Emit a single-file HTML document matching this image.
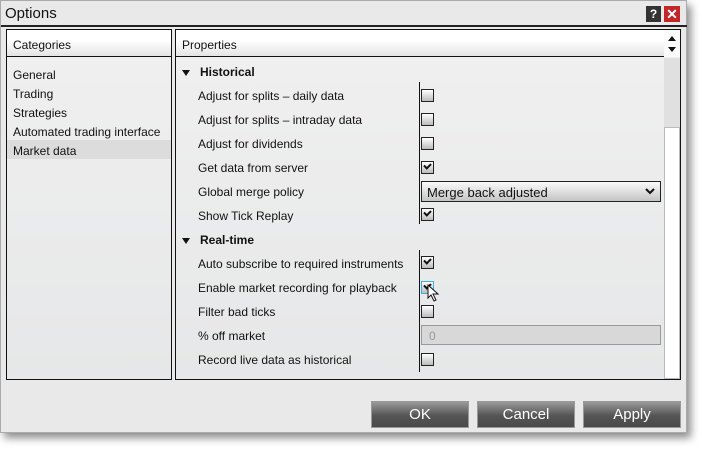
<!DOCTYPE html>
<html><head><style>
*{margin:0;padding:0;box-sizing:border-box}
body{width:702px;height:449px;background:#fff;font-family:"Liberation Sans",sans-serif;font-size:12px;color:#111;position:relative;overflow:hidden}
.win{position:absolute;left:0;top:0;width:687px;height:433px;background:#e9e9e9;border:1px solid #aaa;box-shadow:4px 5px 8px rgba(0,0,0,.45)}
.title{position:absolute;left:4px;top:4px;font-size:15px;color:#111}
.tline{position:absolute;left:0;top:24px;width:686px;height:2px;background:#222}
.a{position:absolute}
.panel{position:absolute;border:1px solid #111;background:linear-gradient(#f0f0f0,#e6e7e8)}
.hdr{position:absolute;left:0;top:0;right:0;height:27px;border-bottom:1px solid #111;background:linear-gradient(#fff 0,#fff 40%,#e4e4e4 100%);padding:8px 0 0 6px;font-size:12px}
.cb{position:absolute;left:421px;width:13px;height:13px;border:1px solid #222;background:linear-gradient(#fff,#bbb)}
.cb.c::after{content:"";position:absolute;left:2px;top:1px;width:5px;height:3px;border-left:2px solid #111;border-bottom:2px solid #111;transform:rotate(-45deg)}
.lbl{position:absolute;left:198px}
.sec{position:absolute;left:200px;font-weight:bold}
.tri{position:absolute;left:182px;width:0;height:0;border-left:4px solid transparent;border-right:4px solid transparent;border-top:6px solid #111}
.btn{position:absolute;top:401px;width:98px;height:27px;border:1px solid #999;background:linear-gradient(#9a9a9a,#555 55%,#4a4a4a);color:#fff;font-size:15px;text-align:center;line-height:25px}
</style></head><body>
<div class="win">
<div class="title">Options</div>
<div class="a" style="left:645px;top:5px;width:15px;height:16px;background:#333;color:#fff;font-weight:bold;font-size:12px;text-align:center;line-height:16px">?</div>
<div class="a" style="left:663px;top:5px;width:16px;height:16px;background:#c0262a;color:#fff;font-weight:bold;font-size:14px;text-align:center;line-height:16px">✕</div>
<div class="tline"></div>
</div>
<div class="panel" style="left:6px;top:29px;width:166px;height:351px">
<div class="hdr">Categories</div>
<div class="a" style="left:6px;top:38px">General</div>
<div class="a" style="left:6px;top:57px">Trading</div>
<div class="a" style="left:6px;top:76px">Strategies</div>
<div class="a" style="left:6px;top:95px">Automated trading interface</div>
<div class="a" style="left:0;top:110px;width:164px;height:19px;background:#dcdcdc"></div>
<div class="a" style="left:6px;top:114px">Market data</div>
</div>
<div class="panel" style="left:175px;top:29px;width:506px;height:351px">
<div class="hdr">Properties</div>
<div class="a" style="left:488px;top:0;width:16px;height:27px;background:#fafafa"></div>
<div class="a" style="left:492px;top:6px;border-left:4px solid transparent;border-right:4px solid transparent;border-bottom:5px solid #111"></div>
<div class="a" style="left:492px;top:17px;border-left:4px solid transparent;border-right:4px solid transparent;border-top:5px solid #111"></div>
<div class="a" style="left:488px;top:28px;width:16px;height:70px;background:#e0e0e0"></div>
<div class="a" style="left:488px;top:97px;width:16px;height:252px;background:#fff;border:1px solid #bbb"></div>
</div>
<div class="a" style="left:419px;top:82px;width:1px;height:142px;background:#111"></div>
<div class="a" style="left:419px;top:250px;width:1px;height:122px;background:#111"></div>
<div class="tri" style="top:70px"></div><div class="sec" style="top:65px">Historical</div>
<div class="lbl" style="top:89px">Adjust for splits – daily data</div><div class="cb" style="top:89px"></div>
<div class="lbl" style="top:113px">Adjust for splits – intraday data</div><div class="cb" style="top:113px"></div>
<div class="lbl" style="top:137px">Adjust for dividends</div><div class="cb" style="top:137px"></div>
<div class="lbl" style="top:161px">Get data from server</div><div class="cb c" style="top:161px"></div>
<div class="lbl" style="top:185px">Global merge policy</div>
<div class="a" style="left:421px;top:181px;width:240px;height:21px;border:1px solid #222;background:linear-gradient(#fafafa,#c4c4c4);padding:3px 0 0 5px;font-size:13px">Merge back adjusted<svg style="position:absolute;right:5px;top:6px" width="10" height="7"><path d="M1 1 L5 5 L9 1" fill="none" stroke="#111" stroke-width="2"/></svg></div>
<div class="lbl" style="top:209px">Show Tick Replay</div><div class="cb c" style="top:208px"></div>
<div class="tri" style="top:238px"></div><div class="sec" style="top:233px">Real-time</div>
<div class="lbl" style="top:257px">Auto subscribe to required instruments</div><div class="cb c" style="top:256px"></div>
<div class="lbl" style="top:281px">Enable market recording for playback</div><div class="cb c" style="top:281px;border-color:#3ab0e0"></div>
<div class="lbl" style="top:305px">Filter bad ticks</div><div class="cb" style="top:305px"></div>
<div class="lbl" style="top:329px">% off market</div>
<div class="a" style="left:421px;top:325px;width:240px;height:20px;border:1px solid #999;background:#d8d8d8;color:#999;padding:3px 0 0 7px">0</div>
<div class="lbl" style="top:353px">Record live data as historical</div><div class="cb" style="top:353px"></div>
<svg class="a" style="left:427px;top:284px" width="16" height="20"><path d="M1 1 L1 14 L4 11 L7 17 L9 16 L6 10 L11 10 Z" fill="#fff" stroke="#111" stroke-width="1"/></svg>
<div class="btn" style="left:371px">OK</div>
<div class="btn" style="left:477px">Cancel</div>
<div class="btn" style="left:583px">Apply</div>
</body></html>
